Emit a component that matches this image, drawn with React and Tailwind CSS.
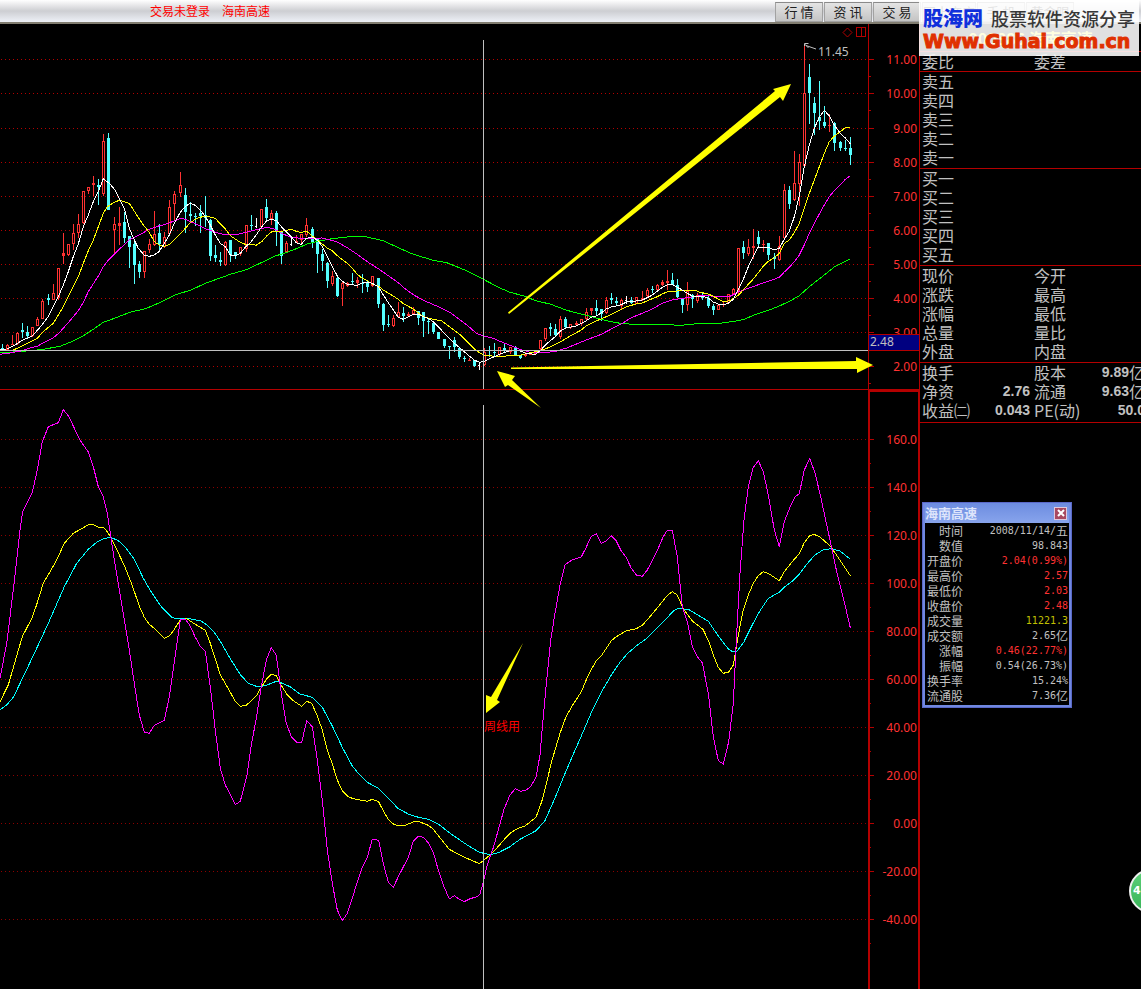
import React from 'react';

/* Chart data: each block is stored in thirds of a unit from its own origin. */
const CANDLE_BLOCKS = [
  {
    origin: [0, 120],
    rows: `8 672 686 690 690 c|22 672 675 690 692 r|37 645 672 677 677 r|52 637 640 673 675 r|67 609 632 636 655 c|82 618 636 648 655 c|97 621 622 650 652 r|112 591 598 620 620 r|127 537 543 598 598 r|145 522 534 540 555 c|160 492 519 542 542 r|175 444 445 535 540 r|190 339 399 410 432 r|205 372 373 405 408 r|220 312 339 374 390 r|235 282 312 341 354 r|250 213 214 310 312 r|265 201 202 215 222 r|280 168 189 197 228 r|295 177 195 201 255 c|310 42 63 224 228 r|325 39 54 270 270 c|343 291 312 331 399 r|358 261 309 320 375 r|373 276 306 354 369 c|388 350 350 381 444 c|403 366 372 437 492 c|418 423 434 456 474 c|433 393 394 458 476 r|448 357 373 392 399 r|463 273 342 377 378 r|478 312 339 374 390 c|493 336 351 381 384 r|508 240 261 342 345 r|523 213 222 254 300 r|541 156 195 221 231 r|556 204 225 278 339 c|571 246 282 288 303 c|586 279 288 293 318 c|601 255 279 290 339 c|616 228 286 294 321 c|631 297 300 408 423 c|646 375 405 416 426 c|661 396 420 428 438 c|676 363 367 437 440 r|691 360 360 405 426 c|706 396 396 405 417 c|721 381 381 404 410 r|739 315 316 388 396 r|754 285 315 319 333 c|769 294 318 321 324 w|784 267 268 322 324 r|799 237 261 294 303 c|814 270 279 297 315 r|829 273 279 333 378 c|844 333 336 408 432 c`,
  },
  {
    origin: [250, 190],
    rows: `109 153 160 186 190 r|124 141 162 165 168 w|139 135 153 159 160 r|154 132 133 150 165 r|169 84 105 135 141 r|187 111 117 156 174 c|202 147 147 192 249 c|217 177 192 213 243 c|232 216 219 273 294 c|247 243 258 282 288 r|262 258 264 318 321 c|277 273 279 297 348 r|292 276 279 288 291 r|307 249 273 276 285 c|322 261 270 279 294 r|337 252 279 283 309 c|352 273 279 291 306 c|367 258 259 288 291 r|385 264 264 342 354 c|400 339 342 405 423 c|415 375 402 405 411 c|430 375 384 408 411 r|445 336 366 381 384 r|460 351 369 378 396 c|475 366 372 380 381 r|490 351 360 372 375 r|505 363 363 384 405 c|520 366 366 393 441 c|535 384 393 398 432 c|550 396 399 426 432 c|565 426 426 447 447 c|583 447 447 468 474 c|598 468 468 470 507 c|613 441 450 472 486 c|628 471 474 501 507 c|643 498 506 509 516 c|658 504 510 513 514 r|673 510 510 528 531 c|688 516 525 528 540 w|703 474 486 525 528 r|718 468 480 483 501 c|733 459 486 489 501 c|748 471 472 495 501 r|763 462 474 480 486 c|781 471 472 486 492 r|796 468 471 495 498 c|811 495 495 504 507 c|826 488 492 500 501 r|841 486 490 496 497 r`,
  },
  {
    origin: [500, 220],
    rows: `106 390 392 402 405 r|121 360 361 389 390 r|136 324 325 359 363 r|151 309 321 327 348 c|166 312 327 346 350 c|181 288 297 353 357 r|196 291 297 321 324 c|211 312 313 325 327 r|229 303 309 316 318 r|244 297 298 312 318 r|259 264 276 298 300 r|274 264 265 275 285 r|289 240 264 273 288 c|304 267 267 282 303 c|319 231 240 281 282 r|334 219 234 242 252 c|349 231 243 251 258 c|364 237 240 258 267 r|379 228 240 243 252 w|394 231 240 250 252 c|409 231 232 252 252 r|427 213 236 242 243 r|442 204 210 230 234 r|457 198 207 210 219 c|472 192 195 210 213 r|487 180 186 196 198 r|502 150 183 189 210 r|517 159 180 195 197 c|532 177 195 231 234 c|547 234 234 255 279 c|562 186 213 257 273 r|577 222 225 237 264 c|592 219 225 243 249 r|607 219 225 234 240 c|625 228 234 258 264 c|640 252 258 270 285 c|655 255 256 270 270 r|670 246 252 256 261 r|685 222 223 249 252 r|700 204 207 222 225 r|715 84 85 213 222 r|730 63 81 99 117 c|745 57 81 104 108 r`,
  },
  {
    origin: [700, 20],
    rows: `160 627 679 686 717 r|175 633 651 672 681 c|190 660 672 675 696 r|205 669 669 705 720 c|223 699 711 717 747 c|238 648 678 721 723 r|253 492 510 656 657 r|268 498 510 552 567 c|283 393 490 542 543 r|298 402 426 493 560 r|313 78 219 439 441 r|328 132 171 219 312 c|343 231 249 279 345 c|358 183 291 303 330 c|373 258 306 318 324 c|388 282 315 320 336 r|403 306 309 369 393 c|421 363 366 384 393 c|436 360 384 386 393 c|451 351 384 405 435 c`,
  },
];

const CANDLES = CANDLE_BLOCKS.flatMap(({ origin: [ox, oy], rows }) =>
  rows.split('|').map((row) => {
    const [x, high, top, bottom, low, kind] = row.split(' ');
    const y = (v) => oy + Math.floor(Number(v) / 3);
    return { x: ox + Math.floor(Number(x) / 3), high: y(high), top: y(top), bottom: y(bottom), low: y(low), kind };
  }),
);

const PRICE_LINES = [
  {
    color: '#00ff00',
    parts: [
      [0, 120, '0,697 40,696 90,692 130,688 180,679 220,663 250,647 280,628 310,607 340,596 390,577 440,565 490,543 530,523 571,511 620,488 661,474 691,463 739,449'],
      [250, 190, '0,234 40,215 75,198 100,191 139,176 169,163 202,154 247,146 300,140 350,141 400,152 445,173 490,193 550,211 590,218 628,233 660,247 700,268'],
      [500, 220, '0,204 30,217 76,229 106,242 150,252 200,271 259,286 319,302 360,310 400,313 500,314 545,316 590,311'],
      [700, 20, '0,911 60,910 115,902 135,897 160,886 205,871 238,858 270,843 298,827 328,800 373,765 403,741 451,717'],
    ],
  },
  {
    color: '#ff00ff',
    parts: [
      [0, 120, '0,703 30,699 67,692 90,684 112,679 130,668 160,653 175,641 205,608 235,572 250,547 265,515 295,468 310,440 325,420 358,388 388,360 418,345 448,328 478,317 493,314 523,303 541,295 556,298 586,311 616,326 646,337 676,344 706,345 736,337'],
      [250, 190, '0,124 20,119 50,112 75,118 94,130 124,142 154,145 217,144 232,148 262,156 292,173 322,193 352,215 385,236 415,257 445,278 460,292 490,314 520,331 565,350 598,366 628,388 658,411 680,431 703,438 733,446'],
      [500, 220, '0,364 30,376 60,388 91,397 130,399 170,393 200,384 259,360 304,343 334,327 364,312 394,293 427,280 457,267 487,250 517,240 547,235 577,231 590,229'],
      [700, 20, '0,827 30,828 90,829 115,816 145,805 175,794 205,784 238,772 253,756 268,742 283,725 298,705 313,675 328,640 343,610 358,582 373,555 388,530 403,512 421,495 436,478 451,467'],
    ],
  },
  {
    color: '#ffff00',
    parts: [
      [0, 120, '40,690 67,678 97,662 112,655 130,635 160,610 190,560 220,500 235,470 250,430 265,392 280,360 295,320 310,280 322,260 343,247 358,241 388,250 410,285 430,315 448,337 463,365 478,375 493,379 508,374 523,360 541,342 571,308 590,295 616,288 646,295 661,312 676,327 691,347 706,357 721,367 739,374'],
      [250, 190, '0,162 18,166 35,155 50,138 65,125 94,124 124,118 139,124 154,128 169,123 187,138 202,150 232,174 247,182 262,197 292,220 307,235 322,253 337,265 352,272 367,282 385,288 400,300 430,318 445,328 460,341 490,357 520,380 550,388 575,393 598,410 628,432 643,446 658,462 673,477 688,488 703,495 733,499'],
      [500, 220, '0,409 60,406 91,398 121,392 151,381 181,366 211,348 244,330 259,317 289,303 319,290 349,276 379,260 409,252 427,249 442,242 472,230 487,222 502,215 532,213 577,210 590,212'],
      [700, 20, '0,818 20,820 40,829 70,845 90,842 115,826 145,793 160,777 175,758 190,738 205,724 223,713 238,700 253,670 268,660 283,638 298,610 313,565 328,520 343,480 358,440 373,400 388,365 403,348 421,335 436,323 451,322'],
    ],
  },
  {
    color: '#ffffff',
    parts: [
      [0, 120, '0,688 20,687 45,675 67,661 97,648 120,622 145,590 160,560 175,530 190,495 205,455 220,410 235,372 250,320 265,285 280,245 295,215 310,176 328,190 345,210 358,235 373,265 388,325 403,360 415,385 433,406 448,409 463,405 478,394 493,370 508,345 523,310 540,278 555,260 571,250 586,256 601,270 616,290 631,315 646,345 661,370 676,380 691,405 706,407 721,400 739,378'],
      [250, 190, '0,160 20,133 35,110 50,92 65,88 80,92 94,110 109,125 124,140 139,158 154,163 169,145 187,141 202,150 217,170 232,200 247,230 262,258 277,274 292,283 322,286 337,279 352,277 367,280 385,290 400,315 415,338 430,360 445,382 460,388 475,380 490,373 505,372 520,380 535,385 550,395 565,410 583,430 598,445 613,460 628,472 643,485 658,498 673,510 688,517 703,514 718,506 733,500'],
      [500, 220, '0,402 30,392 60,392 76,400 106,403 121,392 136,375 151,362 166,350 181,333 200,323 229,318 259,302 274,292 289,288 304,279 319,267 334,261 364,254 379,246 409,243 427,240 442,233 457,225 472,214 487,202 502,195 517,194 532,202 547,210 562,220 577,228 592,231'],
      [700, 20, '7,828 25,834 40,846 55,852 70,854 85,850 100,838 115,809 130,778 145,740 160,708 175,681 205,682 223,690 238,685 253,658 268,634 283,590 298,528 313,440 328,375 343,325 358,292 373,271 388,288 403,315 421,340 436,354 451,371'],
    ],
  },
];

const INDICATOR_LINES = [
  {
    color: '#00ffff',
    parts: [
      [0, 390, '0,960 20,945 40,922 67,866 110,775 145,700 193,590 230,520 265,478 290,457 310,446 332,442 355,452 375,470 403,508 430,565 455,608 485,652 515,682 530,686 560,685 601,692 620,704 645,730 661,754 691,806 721,854 745,880 769,889 784,889 799,886 829,874'],
      [280, 620, '0,187 30,200 60,222 97,232 127,262 157,318 187,382 217,438 240,466 262,487 295,505 322,532 355,566 385,582 415,592 445,598 475,612 508,638 560,674 598,697 630,704 655,698 690,680 720,658 768,632'],
      [540, 440, '15,1142 50,1062 67,1020 90,965 120,897 155,815 184,757 214,705 240,667 262,641 289,618 320,595 345,570 380,535 400,513 412,506 445,508 475,526 505,544 535,588 565,627 580,636 592,633 612,605 635,558 660,512 685,475 718,457 735,440 755,425 780,400 805,367 825,345 850,329 875,326 900,333 915,345 931,357'],
    ],
  },
  {
    color: '#ffff00',
    parts: [
      [0, 390, '0,935 25,885 45,815 67,740 97,682 112,638 130,580 150,545 170,510 193,460 220,430 250,413 265,404 280,404 295,412 310,412 322,425 334,445 355,488 375,532 395,582 418,648 433,682 448,703 463,715 493,745 508,738 523,718 541,690 560,686 586,703 616,721 631,760 661,854 691,907 706,934 721,949 739,946 769,918 784,892 799,868 814,853 829,857'],
      [280, 620, '0,190 20,222 40,242 65,259 80,244 95,250 112,288 127,330 142,390 157,432 172,480 187,512 205,530 220,536 262,544 277,538 295,544 310,572 325,598 340,612 355,617 375,616 400,606 415,604 445,616 460,628 480,653 508,688 545,708 598,731 615,718 640,696 675,656 695,636 715,625 735,618 768,592 785,545'],
      [540, 440, '22,1020 32,975 45,930 60,880 78,830 95,800 124,755 145,705 169,662 184,648 214,602 229,590 259,572 289,566 307,556 330,530 355,500 380,468 397,455 412,465 430,507 457,543 489,568 508,608 520,645 535,682 550,700 566,696 580,675 590,615 598,570 610,510 625,465 640,430 655,407 670,395 685,400 718,422 733,395 755,367 778,341 793,308 809,287 822,283 840,291 858,307 872,320 888,343 905,368 931,407'],
    ],
  },
  {
    color: '#ff00ff',
    parts: [
      [0, 390, '0,865 20,760 40,600 60,420 68,365 97,307 112,240 127,155 145,110 175,98 190,59 205,77 220,108 238,147 265,186 280,230 295,290 310,320 322,370 332,438 343,510 358,600 373,690 388,780 403,880 418,975 433,1027 448,1030 463,1006 493,991 508,920 523,815 541,690 556,688 568,703 586,742 601,769 616,784 631,890 646,1020 661,1135 676,1185 706,1244 721,1234 740,1160 754,1065 769,985 784,890 799,810 814,773 829,796 844,910 859,1000 874,1040'],
      [280, 620, '50,367 65,367 80,302 97,320 112,420 127,540 142,690 157,790 172,870 187,902 202,880 217,835 232,785 247,742 262,712 277,658 296,661 310,730 325,787 340,802 355,770 385,712 400,664 415,649 430,652 445,668 460,697 475,750 490,795 508,837 523,827 535,836 553,845 570,836 592,830 600,823 610,785 622,735 640,683 655,630 672,568 690,525 706,506 722,514 738,510 752,500 768,472 780,405'],
      [540, 440, '8,850 20,720 32,600 45,520 60,435 76,373 98,359 124,351 138,323 153,290 169,281 184,310 199,303 214,287 229,303 244,333 259,353 274,385 289,405 307,409 322,390 350,335 370,290 382,271 397,271 412,350 427,500 442,545 457,620 472,650 487,668 505,760 520,890 535,962 550,972 566,905 580,790 590,580 600,400 612,240 625,140 640,82 655,62 670,95 685,165 703,270 718,320 733,245 750,202 765,171 778,161 793,90 809,56 825,98 843,175 870,300 890,395 915,495 931,563'],
    ],
  },
];

const toPoints = (parts) =>
  parts
    .flatMap(([ox, oy, text]) =>
      text.split(' ').map((pair) => {
        const [x, y] = pair.split(',').map(Number);
        return `${(ox + x / 3).toFixed(1)},${(oy + y / 3).toFixed(1)}`;
      }),
    )
    .join(' ');

const PRICE_TICKS = [
  ['11.00', 59], ['10.00', 93], ['9.00', 128], ['8.00', 162], ['7.00', 196],
  ['6.00', 230], ['5.00', 264], ['4.00', 298], ['3.00', 332], ['2.00', 366],
];

const INDICATOR_TICKS = ['160.0', '140.0', '120.0', '100.0', '80.00', '60.00', '40.00', '20.00', '0.00', '-20.00', '-40.00']
  .map((label, i) => [label, 439 + i * 48]);

function Candle({ x, high, top, bottom, low, kind }) {
  const color = kind === 'r' ? '#ff3232' : kind === 'c' ? '#54ffff' : '#ffffff';
  const h = Math.max(1, bottom - top);
  return (
    <g fill={color}>
      <rect x={x} y={high} width="1" height={Math.max(1, low - high)} />
      {kind === 'w' ? <rect x={x - 1} y={top} width="2" height="1" /> : <rect x={x - 1} y={top} width="3" height={h} />}
      {kind === 'r' && h > 3 && <rect x={x} y={top + 1} width="1" height={h - 2} fill="#000" />}
    </g>
  );
}

function Grid({ ticks, color, half }) {
  return (
    <g>
      {ticks.map(([label, y]) => (
        <g key={label}>
          <path d={`M1 ${y}.5H866`} stroke={color} strokeDasharray="1 3" />
          <path d={`M868 ${y}.5h6M868 ${y + half}.5h3`} stroke="#b40000" />
        </g>
      ))}
    </g>
  );
}

function AxisLabels({ ticks }) {
  return ticks.map(([label, y]) => (
    <text key={label} x="917" y={y + 5} textAnchor="end" fill="#ff3232">{label}</text>
  ));
}

function Lines({ lines }) {
  return lines.map(({ color, parts }) => (
    <polyline key={color} points={toPoints(parts)} fill="none" stroke={color} shapeRendering="crispEdges" />
  ));
}

function PriceChart() {
  return (
    <svg viewBox="0 24 920 366" className="relative z-10 block h-auto w-full overflow-visible font-['Noto_Sans',sans-serif] text-[12px]" role="img" aria-label="海南高速 K线">
      <g shapeRendering="crispEdges">
        <Grid ticks={PRICE_TICKS} color="#b40000" half={17} />
        {CANDLES.map((c) => <Candle key={c.x} {...c} />)}
        <path d="M868.5 24V389M919.5 24V389M0 389.5H920" stroke="#b40000" />
      </g>
      <Lines lines={PRICE_LINES} />
      <path d="M483.5 40V389M0 350.5H868" stroke="#c0c0c0" shapeRendering="crispEdges" />
      <AxisLabels ticks={PRICE_TICKS} />
      <g shapeRendering="crispEdges">
        <rect x="869" y="335" width="50" height="15" fill="#000080" />
        <path d="M868 334.5h52M868 350.5h52" stroke="#b40000" />
      </g>
      <text x="870" y="346" fill="#c0c0c0">2.48</text>
      <text x="818" y="56" fill="#c0c0c0">11.45</text>
      <path d="M804.5 46v-2.500h4M806 45.500l10 3.500M804.500 44l4 4" fill="none" stroke="#c0c0c0" />
      <path d="M847.500 28l4.500 4.500-4.500 4.500-4.500-4.500z" fill="none" stroke="#b40000" />
      <path d="M856.500 27.500h9v9h-9zM861.500 27.500v9" fill="none" stroke="#b40000" shapeRendering="crispEdges" />
      <g fill="#ffff00">
        <path d="M508 312.500L775 91L773 89L791 84L783 101L780 97L509 314z" />
        <path d="M511 367.500L856 361V357L873 365L857 373V369L511 369z" />
        <path d="M497 371L515 376L512 380L541 408L508 385L505 387z" />
      </g>
    </svg>
  );
}

function IndicatorChart() {
  return (
    <svg viewBox="0 390 920 599" className="block h-auto w-full font-['Noto_Sans',sans-serif] text-[12px]" role="img" aria-label="周线用">
      <g shapeRendering="crispEdges">
        <Grid ticks={INDICATOR_TICKS} color="#8c0000" half={24} />
        <path d="M869 390V989M919 390V989M868 390.500H920" stroke="#b40000" strokeWidth="2" />
      </g>
      <Lines lines={INDICATOR_LINES} />
      <path d="M483.500 405V989" stroke="#c0c0c0" shapeRendering="crispEdges" />
      <AxisLabels ticks={INDICATOR_TICKS} />
      <path d="M523 643L497 700L500 702L486 713V695L491 697z" fill="#ffff00" />
      <text x="484" y="731" fill="#ff0000" className="font-['Noto_Sans_CJK_SC',sans-serif] text-[12px]">周线用</text>
    </svg>
  );
}

const NAV = [
  ['行 情', 'w-12'], ['资 讯', 'w-12'], ['交 易', 'w-12'],
  ['网上商店', 'w-[54px]'], ['手 机', 'w-12'], ['黄金眼', 'w-12'],
];

function Header() {
  return (
    <header className="flex h-6 items-stretch border-b-2 border-[#817d70] bg-linear-to-b from-[#ffffff] via-[#cdced2] to-[#eef1f8]">
      <div className="flex flex-1 items-center gap-3 pl-[150px] text-[12px] text-[#ff0000]">
        <span>交易未登录</span>
        <span>海南高速</span>
      </div>
      <nav className="flex w-[366px] shrink-0 gap-px pt-0.5">
        {NAV.map(([label, width]) => (
          <button key={label} type="button" className={`${width} h-5 border border-[#a2a2a2] border-t-[#8a8a8a] bg-linear-to-b from-[#e4e4e4] to-[#c4c4c4] text-[13px] leading-4 whitespace-pre text-[#202020]`}>
            {label}
          </button>
        ))}
      </nav>
    </header>
  );
}

function Watermark() {
  return (
    <div className="absolute top-0 right-0.5 z-20 h-14 w-[220px] bg-white/88 pt-1.5 pl-1">
      <div className="flex items-center gap-2 leading-6">
        <span className="text-[20px] font-black text-[#1030dc]">股海网</span>
        <span className="text-[18px] font-medium whitespace-nowrap text-[#383838]">股票软件资源分享</span>
      </div>
      <div className="font-['DejaVu_Sans',sans-serif] text-[19px] leading-[22px] font-bold text-[#e03000] [-webkit-text-stroke:1px_#e03000]">
        Www.Guhai.com.cn
      </div>
    </div>
  );
}

const QUOTE_SECTIONS = [
  [['委比', '', '委差', '']],
  [['卖五'], ['卖四'], ['卖三'], ['卖二'], ['卖一']],
  [['买一'], ['买二'], ['买三'], ['买四'], ['买五']],
  [['现价', '', '今开', ''], ['涨跌', '', '最高', ''], ['涨幅', '', '最低', ''], ['总量', '', '量比', ''], ['外盘', '', '内盘', '']],
  [['换手', '', '股本', '9.89', '亿'], ['净资', '2.76', '流通', '9.63', '亿'], ['收益㈡', '0.043', 'PE(动)', '50.0', '']],
];

function QuotePanel() {
  return (
    <aside className="w-[221px] shrink-0 overflow-hidden text-[16px] leading-[19px] text-[#c0c0c0]">
      <h1 className="h-7 border-b border-[#b40000] text-center text-[16px] leading-7 font-bold text-[#ffff00]">000886 海南高速</h1>
      {QUOTE_SECTIONS.map((rows) => (
        <section key={rows[0][0]} className={`border-b border-[#b40000] ${rows.length === 1 ? '' : rows.length === 3 ? 'pb-0.5' : 'pb-px'}`}>
          {rows.map(([a, av, b, bv, unit]) => (
            <div key={a} className="-mr-1 flex h-[19px] items-center whitespace-nowrap">
              <div className="flex w-[110px] shrink-0 justify-between pl-0.5">
                <span>{a}</span>
                {av && <span className="font-['Liberation_Sans',sans-serif] text-[14px] font-bold">{av}</span>}
              </div>
              <div className="flex flex-1 justify-between pl-1">
                <span>{b}</span>
                {bv && (
                  <span className="flex">
                    <span className="font-['Liberation_Sans',sans-serif] text-[14px] font-bold">{bv}</span>
                    {unit}
                  </span>
                )}
              </div>
            </div>
          ))}
        </section>
      ))}
    </aside>
  );
}

const DETAIL = [
  ['时间', '2008/11/14/', '五', 'text-[#c0c0c0]'],
  ['数值', '98.843', '', 'text-[#c0c0c0]'],
  ['开盘价', '2.04(0.99%)', '', 'text-[#ff3232]'],
  ['最高价', '2.57', '', 'text-[#ff3232]'],
  ['最低价', '2.03', '', 'text-[#ff3232]'],
  ['收盘价', '2.48', '', 'text-[#ff3232]'],
  ['成交量', '11221.3', '', 'text-[#c0c000]'],
  ['成交额', '2.65', '亿', 'text-[#c0c0c0]'],
  ['涨幅', '0.46(22.77%)', '', 'text-[#ff3232]'],
  ['振幅', '0.54(26.73%)', '', 'text-[#c0c0c0]'],
  ['换手率', '15.24%', '', 'text-[#c0c0c0]'],
  ['流通股', '7.36', '亿', 'text-[#c0c0c0]'],
];

function DetailWindow() {
  return (
    <div className="absolute top-[502px] right-[69px] w-[150px] border border-[#5a68c8] bg-[#7088e0] p-0.5 pt-0">
      <div className="flex h-5 items-center justify-between bg-linear-to-b from-[#6c8ce0] to-[#88a4ec] pr-0.5 text-[13px] font-bold text-[#dde4fb]">
        <span>海南高速</span>
        <button type="button" aria-label="关闭" className="flex size-[13px] items-center justify-center border border-[#e0c8dc] bg-[#a84860]">
          <svg viewBox="0 0 8 8" className="size-2"><path d="M1 1l6 6M7 1L1 7" stroke="#fff" strokeWidth="2" /></svg>
        </button>
      </div>
      <table className="w-full bg-black text-[12px] leading-[15px]">
        <tbody>
          {DETAIL.map(([label, value, unit, color]) => (
            <tr key={label}>
              <th scope="row" className="w-[38px] p-0 text-right font-normal whitespace-nowrap text-[#c0c0c0]">{label}</th>
              <td className={`${color} p-0 pr-px`}>
                <div className="flex h-[15px] items-center justify-end whitespace-nowrap">
                  <span className="font-['DejaVu_Sans_Mono',monospace] text-[10px]">{value}</span>
                  {unit}
                </div>
              </td>
            </tr>
          ))}
          <tr aria-hidden="true"><td colSpan={2} className="h-0.5 p-0" /></tr>
        </tbody>
      </table>
    </div>
  );
}

export default function App() {
  return (
    <div className="relative min-h-screen overflow-hidden bg-black font-['Noto_Sans_CJK_SC',sans-serif]">
      <Header />
      <div className="flex items-start">
        <main className="min-w-0 flex-1">
          <PriceChart />
          <IndicatorChart />
        </main>
        <QuotePanel />
      </div>
      <Watermark />
      <DetailWindow />
      <div className="absolute top-[869px] -right-8 flex size-11 items-center rounded-full border-2 border-[#f0f0f0] bg-linear-to-b from-[#5cd078] to-[#38b458] pl-0.5 font-['DejaVu_Sans',sans-serif] text-[11px] font-bold text-white">
        4
      </div>
    </div>
  );
}
